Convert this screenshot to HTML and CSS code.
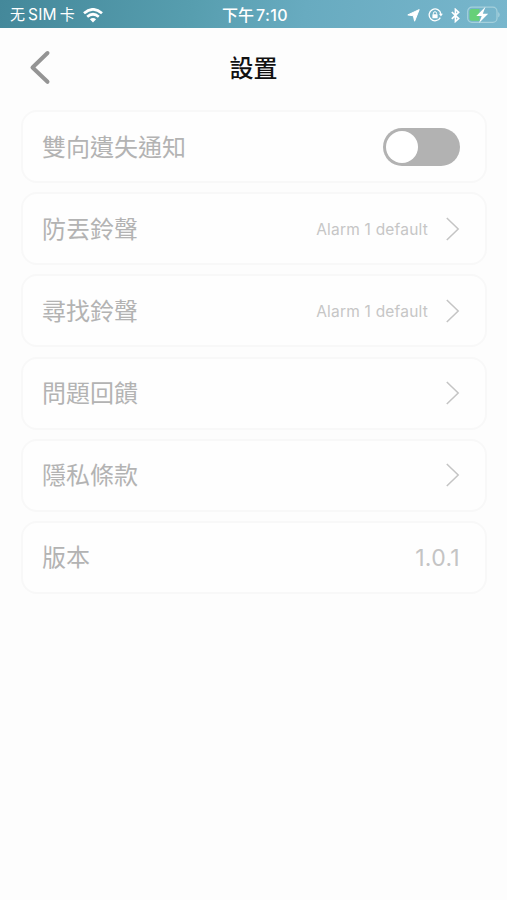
FILE: index.html
```html
<!DOCTYPE html>
<html lang="zh-Hant">
<head>
<meta charset="utf-8">
<meta name="viewport" content="width=device-width, initial-scale=1">
<title>設置</title>
<link rel="stylesheet" href="styles.css">
</head>
<body>
<header class="status">
  <div class="carrier"><span class="carrier-name"><span>无</span><span class="latin">SIM</span><span>卡</span></span>
    <svg width="20" height="15" viewBox="0 0 20 15" fill="none" stroke="#fff" stroke-width="2.700"><path d="M1 5.300Q10-2.600 19 5.300M4.200 8.700q5.800-4.900 11.600 0"/><path d="M10 14.400 6.900 11.300q3.100-2.500 6.200 0z" fill="#fff" stroke="none"/></svg>
  </div>
  <div class="time"><span>下午</span><span class="clock">7:10</span></div>
  <div class="indicators">
    <svg width="13" height="13" viewBox="0 0 13 13"><path d="M12.200 .6 7.600 12.200 6.400 6.800.8 5.900z" fill="#fff" stroke="#fff" stroke-width="1" stroke-linejoin="round"/></svg>
    <svg class="lock" width="15" height="14" viewBox="0 0 15 14" fill="none" stroke="#fff"><path d="M12.300 9.600A5.900 5.900 0 1 1 12.900 6" stroke-width="1.300"/><path d="M10.900 5.700h4l-2 2.700z" fill="#fff" stroke="none"/><rect x="4.400" y="6.200" width="5.200" height="4" rx=".5" fill="#fff" stroke="none"/><path d="M5.400 6.400V5.300a1.600 1.600 0 0 1 3.200 0v1.100"/></svg>
    <svg class="bluetooth" width="9" height="15" viewBox="0 0 9 15" fill="none" stroke="#fff" stroke-width="1.600"><path d="M.8 4 7.700 10.600 4.400 13.500V1.300L7.700 4.200.8 10.800"/></svg>
    <svg class="battery" width="33" height="18" viewBox="0 0 33 18"><rect x=".7" y="1.200" width="29.300" height="15.200" rx="4.200" fill="none" stroke="#a5d0dc" stroke-width="1.200"/><path d="M5 3h7.500v11.700H5Q2.500 14.700 2.500 12.200V5.500Q2.500 3 5 3z" fill="#66d078"/><path d="M31.200 6q1.500 1 1.500 2.800t-1.500 2.800z" fill="#a5d0dc"/><path d="M18.500.8 9.300 10h5.400L12 17l9.200-9.300h-5.400z" fill="#fff"/></svg>
  </div>
</header>
<nav class="navbar">
  <svg class="back" width="22" height="36" viewBox="0 0 22 36" fill="none" stroke="#949494" stroke-width="4" stroke-linecap="round" stroke-linejoin="round"><path d="M18.500 4 3.500 18.500 18.500 32.800"/></svg>
  <h1>設置</h1>
</nav>
<main class="settings">
  <div class="card"><span class="label">雙向遺失通知</span><span class="toggle"><span class="knob"></span></span></div>
  <div class="card"><span class="label">防丟鈴聲</span><span class="value">Alarm 1 default</span><svg class="chevron" width="14" height="24" viewBox="0 0 14 24"><path d="m.8 1 11.400 11L.8 23"/></svg></div>
  <div class="card"><span class="label">尋找鈴聲</span><span class="value">Alarm 1 default</span><svg class="chevron" width="14" height="24" viewBox="0 0 14 24"><path d="m.8 1 11.400 11L.8 23"/></svg></div>
  <div class="card"><span class="label">問題回饋</span><svg class="chevron" width="14" height="24" viewBox="0 0 14 24"><path d="m.8 1 11.400 11L.8 23"/></svg></div>
  <div class="card"><span class="label">隱私條款</span><svg class="chevron" width="14" height="24" viewBox="0 0 14 24"><path d="m.8 1 11.400 11L.8 23"/></svg></div>
  <div class="card"><span class="label">版本</span><span class="version">1.0.1</span></div>
</main>
</body>
</html>
```
FILE: styles.css
```css
* { box-sizing: border-box; }
body {
  margin: 0;
  min-height: 900px;
  background: #fdfdfd;
  font-family: Inter, "Noto Sans CJK TC", sans-serif;
}
svg { display: block; flex: none; }
.status {
  height: 28px;
  display: grid;
  grid-template-columns: 1fr auto 1fr;
  align-items: center;
  padding: 2px 7px 0 10px;
  color: #fff;
  font-size: 16px;
  line-height: 26px;
  background: linear-gradient(100deg, #44889a 0%, #579eaf 38%, #68abc0 60%, #78b6cc 100%);
}
.carrier, .carrier-name, .time, .indicators { display: flex; align-items: center; }
.carrier { gap: 8px; }
.carrier-name { gap: 3px; font-size: 15px; }
.latin { font-size: 15.500px; letter-spacing: .2px; }
.time { gap: 2px; font-weight: 500; }
.clock { font-weight: 500; font-size: 16px; letter-spacing: .4px; }
.indicators { justify-content: flex-end; }
.lock { margin-left: 8px; }
.bluetooth { margin-left: 8px; }
.battery { margin-left: 7px; }
.navbar {
  height: 82px;
  display: grid;
  grid-template-columns: 80px 1fr 80px;
  align-items: center;
}
.back { margin-left: 29px; margin-top: -4px; }
h1 {
  margin: -1px 0 0;
  text-align: center;
  color: #111;
  font-size: 24px;
  font-weight: 500;
  line-height: 36px;
}
.settings {
  display: flex;
  flex-direction: column;
  gap: 9.200px;
  padding: 0 20px 0 21px;
}
.card {
  height: 73px;
  display: flex;
  align-items: center;
  padding: 0 25px 0 19px;
  border: 2px solid #f8f8f8;
  border-radius: 16px;
  background: #fefefe;
}
.label {
  margin-right: auto;
  padding-top: 2px;
  color: #b3b3b3;
  font-size: 24px;
  line-height: 36px;
}
.toggle {
  width: 77px;
  height: 38px;
  padding: 3px;
  border-radius: 19px;
  background: #b2b2b2;
}
.knob {
  display: block;
  width: 32px;
  height: 32px;
  border-radius: 50%;
  background: #fff;
}
.value { margin-right: 18px; padding-top: 2px; color: #c6c6c6; font-size: 15.500px; letter-spacing: .2px; }
.version { padding-top: 2px; color: #c4c4c4; font-size: 23px; letter-spacing: .3px; }
.chevron { fill: none; stroke: #c4c4c4; stroke-width: 1.500; }
```
